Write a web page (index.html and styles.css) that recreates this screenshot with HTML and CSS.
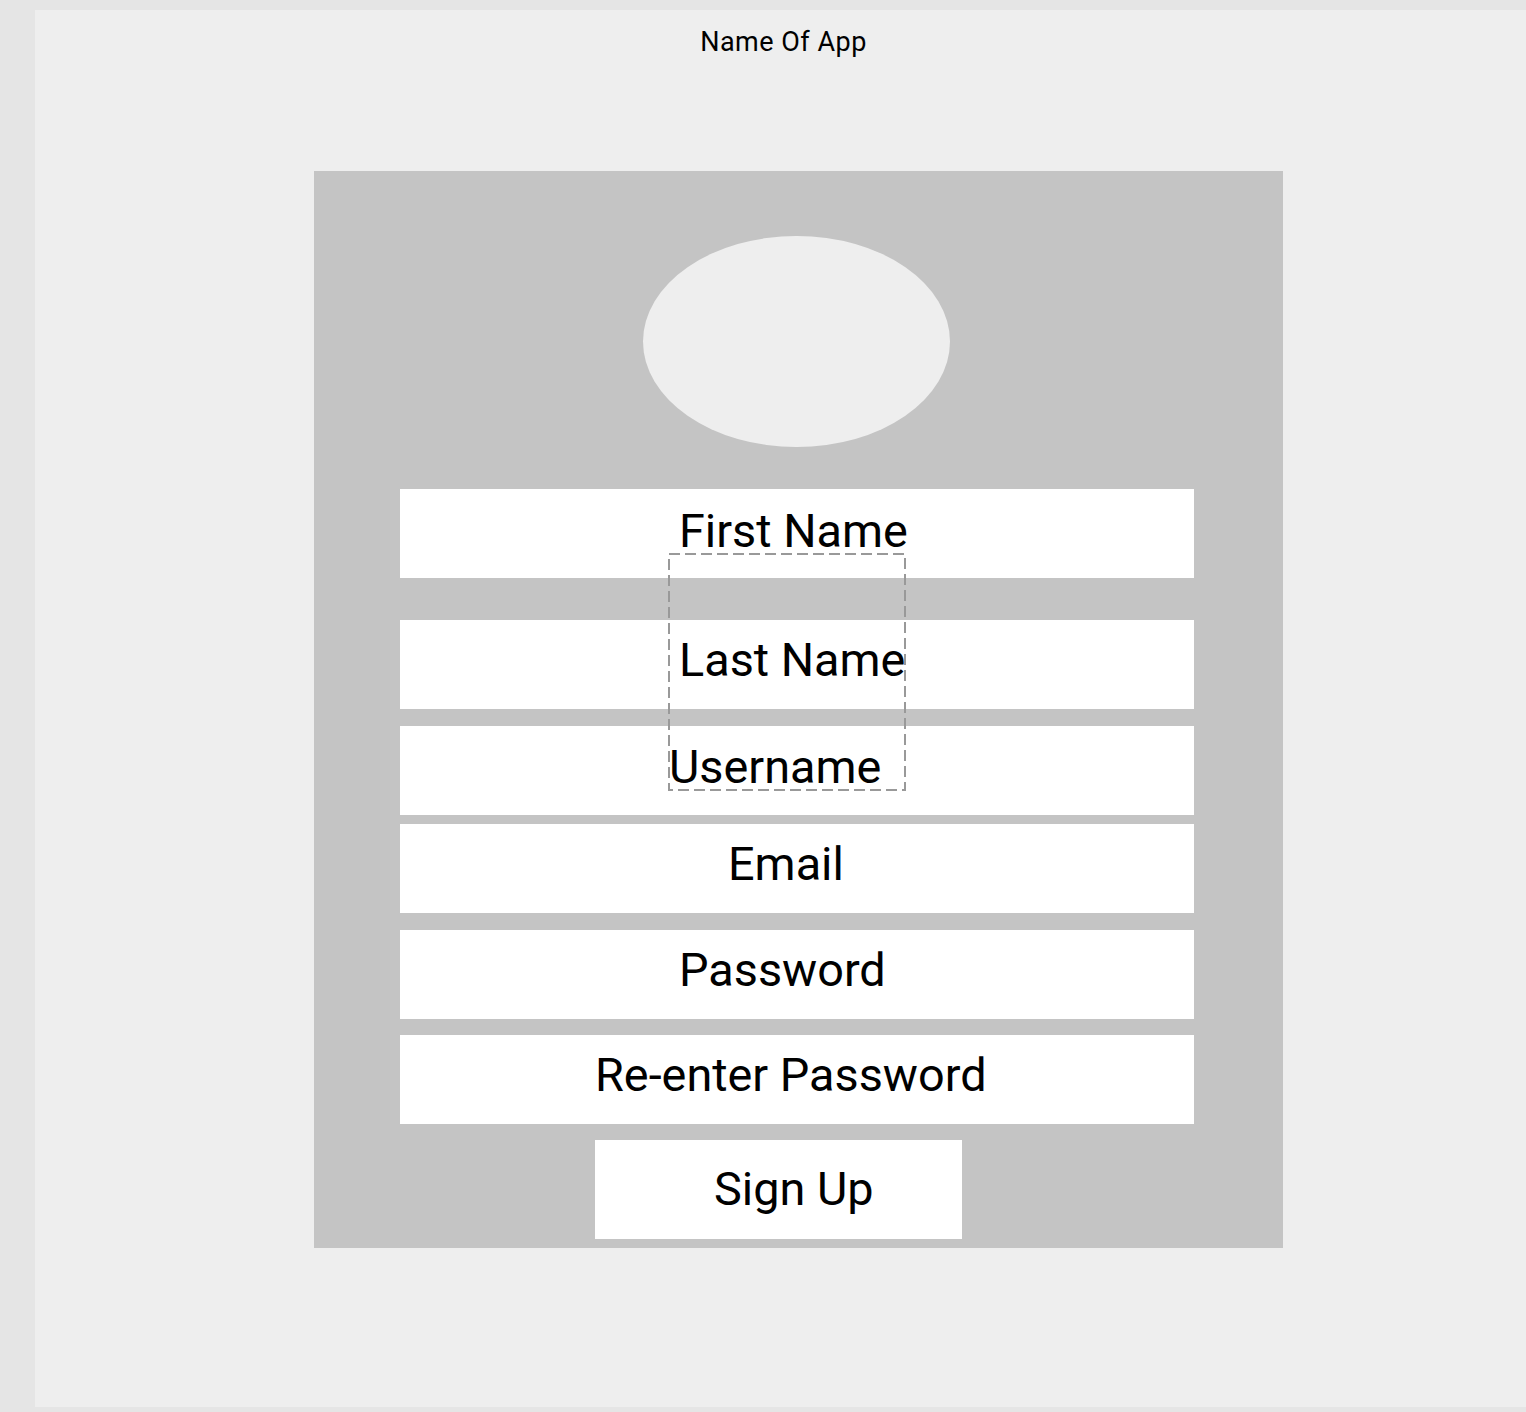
FILE: index.html
```html
<!DOCTYPE html>
<html>
<head>
<meta charset="utf-8">
<title>Sign Up</title>
<link rel="stylesheet" href="styles.css">
</head>
<body>
<div class="page">
  <div class="frame">
    <div class="title">Name Of App</div>
    <div class="card">
      <div class="avatar"></div>
      <div class="field f-first"><span>First Name</span></div>
      <div class="field f-last"><span>Last Name</span></div>
      <div class="field f-user"><span>Username</span></div>
      <div class="field f-email"><span>Email</span></div>
      <div class="field f-pass"><span>Password</span></div>
      <div class="field f-repass"><span>Re-enter Password</span></div>
      <div class="button"><span>Sign Up</span></div>
      <svg class="selection" width="238" height="238" viewBox="0 0 238 238">
        <rect x="1" y="1" width="236" height="236" fill="none" stroke="#999999" stroke-width="2" stroke-dasharray="11 5"/>
      </svg>
    </div>
  </div>
</div>
</body>
</html>
```

FILE: styles.css
```css
* { box-sizing: border-box; }
html, body {
  margin: 0;
  padding: 0;
  background: #e5e5e5;
  font-family: Roboto, "Liberation Sans", sans-serif;
  color: #000;
}
.page {
  width: 1526px;
  height: 1412px;
  padding: 10px 0 0 35px;
  overflow: hidden;
}
.frame {
  width: 1491px;
  height: 1397px;
  background: #eeeeee;
  padding-top: 17px;
}
.title {
  font-size: 27px;
  letter-spacing: 0.5px;
  line-height: 30px;
  text-align: center;
  height: 30px;
  padding-left: 6px;
}
.card {
  position: relative;
  margin-top: 114px;
  margin-left: 279px;
  width: 969px;
  height: 1077px;
  background: #c4c4c4;
  padding: 65px 0 0 86px;
  display: flex;
  flex-direction: column;
  align-items: flex-start;
}
.avatar {
  width: 307px;
  height: 211px;
  margin-left: 243px;
  border-radius: 50%;
  background: #eeeeee;
}
.field {
  width: 794px;
  height: 89px;
  background: #ffffff;
  display: flex;
  align-items: center;
  font-size: 46.8px;
  padding-bottom: 10px;
  white-space: nowrap;
}
.f-first { margin-top: 42px; padding-left: 279px; padding-bottom: 6px; }
.f-last { margin-top: 42px; padding-left: 279px; }
.f-user { margin-top: 17px; padding-left: 269px; padding-bottom: 8px; }
.f-email { margin-top: 9px; padding-left: 328px; }
.f-pass { margin-top: 17px; padding-left: 279px; }
.f-repass { margin-top: 16px; padding-left: 195px; }
.button {
  margin-top: 16px;
  margin-left: 195px;
  width: 367px;
  height: 99px;
  background: #ffffff;
  display: flex;
  align-items: center;
  padding-left: 119px;
  padding-bottom: 2px;
  font-size: 46.8px;
  white-space: nowrap;
}
.selection {
  position: absolute;
  left: 354px;
  top: 382px;
  pointer-events: none;
}
```
